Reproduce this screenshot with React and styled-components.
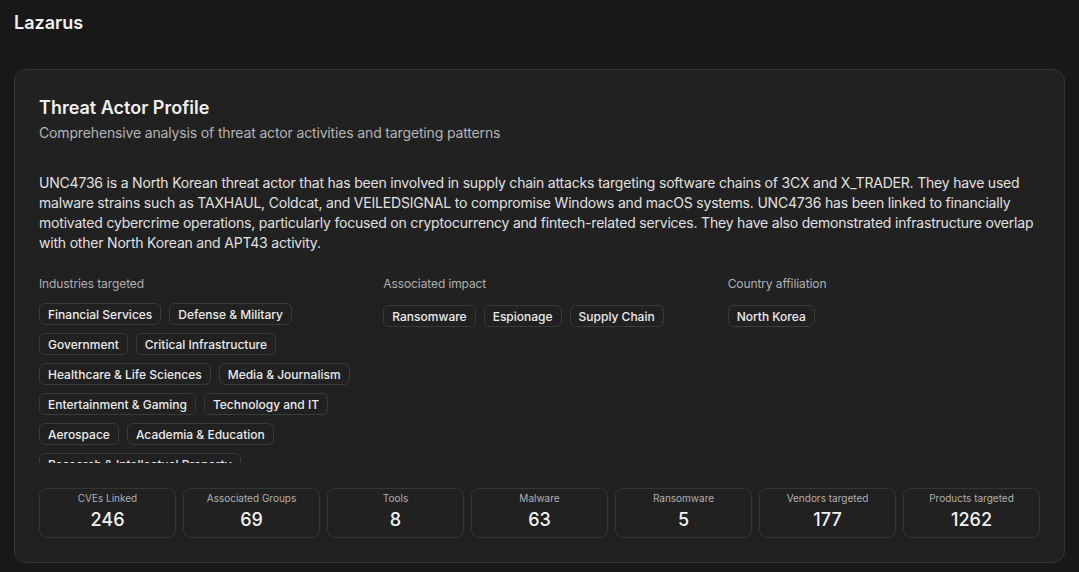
import styled, { createGlobalStyle } from "styled-components";

const industries = [
  "Financial Services",
  "Defense & Military",
  "Government",
  "Critical Infrastructure",
  "Healthcare & Life Sciences",
  "Media & Journalism",
  "Entertainment & Gaming",
  "Technology and IT",
  "Aerospace",
  "Academia & Education",
  "Research & Intellectual Property",
];

const impacts = ["Ransomware", "Espionage", "Supply Chain"];
const countries = ["North Korea"];

const stats = [
  { label: "CVEs Linked", value: 246 },
  { label: "Associated Groups", value: 69 },
  { label: "Tools", value: 8 },
  { label: "Malware", value: 63 },
  { label: "Ransomware", value: 5 },
  { label: "Vendors targeted", value: 177 },
  { label: "Products targeted", value: 1262 },
];

const App = () => {
  return (
    <Page>
      <GlobalStyle />
      <PageTitle>Lazarus</PageTitle>
      <Card>
        <CardTitle>Threat Actor Profile</CardTitle>
        <CardSubtitle>
          Comprehensive analysis of threat actor activities and targeting patterns
        </CardSubtitle>
        <Description>
          UNC4736 is a North Korean threat actor that has been involved in supply chain
          attacks targeting software chains of 3CX and X_TRADER. They have used malware
          strains such as TAXHAUL, Coldcat, and VEILEDSIGNAL to compromise Windows and
          macOS systems. UNC4736 has been linked to financially motivated cybercrime
          operations, particularly focused on cryptocurrency and fintech-related services.
          They have also demonstrated infrastructure overlap with other North Korean and
          APT43 activity.
        </Description>

        <Sections>
          <Section>
            <SectionLabel>Industries targeted</SectionLabel>
            <TagList $clip>
              {industries.map((item) => (
                <Tag key={item}>{item}</Tag>
              ))}
            </TagList>
          </Section>
          <Section>
            <SectionLabel>Associated impact</SectionLabel>
            <TagList $offset>
              {impacts.map((item) => (
                <Tag key={item}>{item}</Tag>
              ))}
            </TagList>
          </Section>
          <Section>
            <SectionLabel>Country affiliation</SectionLabel>
            <TagList $offset>
              {countries.map((item) => (
                <Tag key={item}>{item}</Tag>
              ))}
            </TagList>
          </Section>
        </Sections>

        <StatsRow>
          {stats.map((stat) => (
            <StatBox key={stat.label}>
              <StatLabel>{stat.label}</StatLabel>
              <StatValue>{stat.value}</StatValue>
            </StatBox>
          ))}
        </StatsRow>
      </Card>
    </Page>
  );
};

const GlobalStyle = createGlobalStyle`
  html, body {
    margin: 0;
    padding: 0;
    background: #181818;
  }
  body {
    font-family: Inter, "Noto Sans", sans-serif;
    color: #ececec;
  }
  * {
    box-sizing: border-box;
  }
`;

const Page = styled.div`
  min-height: 572px;
  padding: 11px 14px 8px;
  background: #181818;
`;

const PageTitle = styled.h1`
  margin: 0 0 34px;
  font-size: 18px;
  line-height: 24px;
  font-weight: 600;
  color: #f2f2f2;
`;

const Card = styled.div`
  background: #212121;
  border: 1px solid #353535;
  border-radius: 12px;
  padding: 25px 24px 24px;
`;

const CardTitle = styled.h2`
  margin: 0;
  font-size: 18px;
  line-height: 26px;
  font-weight: 600;
  color: #f0f0f0;
`;

const CardSubtitle = styled.p`
  margin: 2px 0 0;
  font-size: 14px;
  line-height: 20px;
  letter-spacing: -0.15px;
  color: #b4b4b4;
`;

const Description = styled.p`
  margin: 30px 0 0;
  font-size: 14px;
  line-height: 20px;
  letter-spacing: -0.2px;
  color: #e0e0e0;
`;

const Sections = styled.div`
  display: grid;
  grid-template-columns: repeat(3, 1fr);
  column-gap: 32px;
  margin-top: 23px;
`;

const Section = styled.div`
  display: flex;
  flex-direction: column;
`;

const SectionLabel = styled.div`
  font-size: 12px;
  line-height: 16px;
  letter-spacing: -0.1px;
  color: #b0b0b0;
  margin-bottom: 11px;
`;

const TagList = styled.div`
  display: flex;
  flex-wrap: wrap;
  align-content: flex-start;
  gap: 8px;
  padding-top: ${(p) => (p.$offset ? "2px" : "0")};
  max-height: ${(p) => (p.$clip ? "160px" : "none")};
  overflow: hidden;
`;

const Tag = styled.span`
  display: inline-flex;
  align-items: center;
  height: 22px;
  padding: 0 8px;
  border: 1px solid #3a3a3a;
  border-radius: 6px;
  font-size: 12px;
  font-weight: 500;
  color: #ececec;
  white-space: nowrap;
`;

const StatsRow = styled.div`
  display: grid;
  grid-template-columns: repeat(7, 1fr);
  gap: 7px;
  margin-top: 25px;
`;

const StatBox = styled.div`
  height: 50px;
  border: 1px solid #363636;
  border-radius: 8px;
  display: flex;
  flex-direction: column;
  align-items: center;
  padding-top: 2px;
`;

const StatLabel = styled.div`
  font-size: 10px;
  line-height: 14px;
  color: #b0b0b0;
`;

const StatValue = styled.div`
  margin-top: 3px;
  font-size: 18px;
  line-height: 24px;
  font-weight: 500;
  color: #f2f2f2;
`;

export default App;
